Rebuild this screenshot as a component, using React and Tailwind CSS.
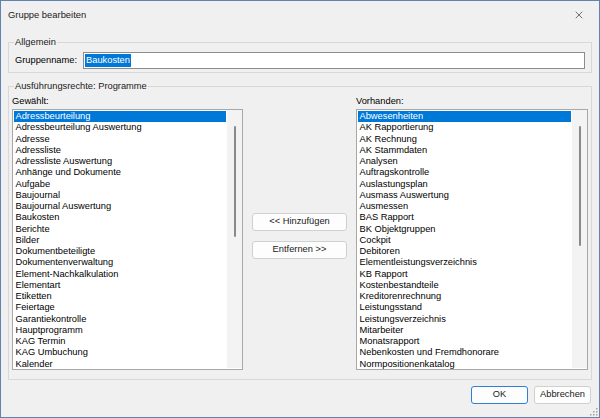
import { X } from "lucide-react";

const GEWAEHLT = [
  "Adressbeurteilung", "Adressbeurteilung Auswertung", "Adresse", "Adressliste",
  "Adressliste Auswertung", "Anhänge und Dokumente", "Aufgabe", "Baujournal",
  "Baujournal Auswertung", "Baukosten", "Berichte", "Bilder", "Dokumentbeteiligte",
  "Dokumentenverwaltung", "Element-Nachkalkulation", "Elementart", "Etiketten",
  "Feiertage", "Garantiekontrolle", "Hauptprogramm", "KAG Termin", "KAG Umbuchung",
  "Kalender",
];

const VORHANDEN = [
  "Abwesenheiten", "AK Rapportierung", "AK Rechnung", "AK Stammdaten", "Analysen",
  "Auftragskontrolle", "Auslastungsplan", "Ausmass Auswertung", "Ausmessen",
  "BAS Rapport", "BK Objektgruppen", "Cockpit", "Debitoren",
  "Elementleistungsverzeichnis", "KB Rapport", "Kostenbestandteile",
  "Kreditorenrechnung", "Leistungsstand", "Leistungsverzeichnis", "Mitarbeiter",
  "Monatsrapport", "Nebenkosten und Fremdhonorare", "Normpositionenkatalog",
];

function ListBox({ items, thumb }) {
  return (
    <div className="h-[261px] border border-[#a8a8a8] bg-white flex overflow-hidden">
      <div className="flex-1 pt-[1px]">
        {items.map((it, i) => (
          <div
            key={it}
            className={`mx-[1px] h-[11.25px] leading-[11.25px] pl-[1.5px] whitespace-nowrap ${i === 0 ? "bg-[#0078d7] text-white" : "text-black"}`}
          >
            {it}
          </div>
        ))}
      </div>
      <div className="w-[15px] mb-[1px] bg-[#f3f3f3] flex justify-center pt-[16px]">
        <div className={`w-[2px] rounded-full bg-[#8a8a8a] ${thumb}`} />
      </div>
    </div>
  );
}

function Btn({ children, className = "" }) {
  return (
    <button className={`h-[18px] rounded-[3px] bg-[#fdfdfd] border text-[9.3px] text-[#1a1a1a] leading-none ${className}`}>
      {children}
    </button>
  );
}

export default function App() {
  return (
    <div
      className="relative w-[600px] h-[418px] bg-[#f0f0f0] border border-[#6283b0] flex flex-col text-[9.3px] text-black"
      style={{ fontFamily: '"Liberation Sans", Arial, sans-serif' }}
    >
      <div className="h-[28px] flex items-center justify-between pl-[7px] pr-[14px]">
        <span className="text-[9.4px] text-[#1a1a1a]">Gruppe bearbeiten</span>
        <X size={12} strokeWidth={1.2} className="text-[#1a1a1a]" />
      </div>

      <fieldset className="mx-[7px] mt-[7px] border border-[#d8d8d8] pl-[6px] pr-[6px] pb-[3px]">
        <legend className="ml-[-1px] px-[1px] leading-[12px] text-[#1a1a1a]">Allgemein</legend>
        <div className="mt-[4px] flex items-center gap-[6px]">
          <span className="whitespace-nowrap">Gruppenname:</span>
          <div className="flex-1 h-[17px] border border-[#8c8c8c] bg-white flex items-center pl-[1px]">
            <span className="bg-[#0078d7] text-white leading-[13px] px-[1px]">Baukosten</span>
          </div>
        </div>
      </fieldset>

      <fieldset className="mx-[7px] mt-[7px] border border-[#d8d8d8] pl-[3px] pr-[3px] pb-[9px]">
        <legend className="ml-[2px] px-[1px] leading-[12px] text-[#1a1a1a]">Ausführungsrechte: Programme</legend>
        <div className="grid grid-cols-[231px_1fr_232px]">
          <div className="mt-[4px] h-[11px] leading-[11px] mb-[2px]">Gewählt:</div>
          <div />
          <div className="mt-[4px] h-[11px] leading-[11px] mb-[2px]">Vorhanden:</div>

          <ListBox items={GEWAEHLT} thumb="h-[111px]" />
          <div className="flex flex-col pl-[9px] pt-[104px] gap-[10px]">
            <Btn className="w-[95px] border-[#d0d0d0]">&lt;&lt; Hinzufügen</Btn>
            <Btn className="w-[95px] border-[#d0d0d0]">Entfernen &gt;&gt;</Btn>
          </div>
          <ListBox items={VORHANDEN} thumb="h-[120px]" />
        </div>
      </fieldset>

      <div className="mt-[6px] flex justify-end gap-[6px] pr-[8px]">
        <Btn className="w-[57px] border-[#2f7fd3]">OK</Btn>
        <Btn className="w-[57px] border-[#d0d0d0]">Abbrechen</Btn>
      </div>

      <svg className="absolute right-[1px] bottom-[1px]" width="8" height="8" viewBox="0 0 8 8">
        {[[6, 0], [6, 3], [3, 3], [6, 6], [3, 6], [0, 6]].map(([x, y]) => (
          <rect key={`${x}-${y}`} x={x} y={y} width="1.5" height="1.5" fill="#a0a0a0" />
        ))}
      </svg>
    </div>
  );
}
